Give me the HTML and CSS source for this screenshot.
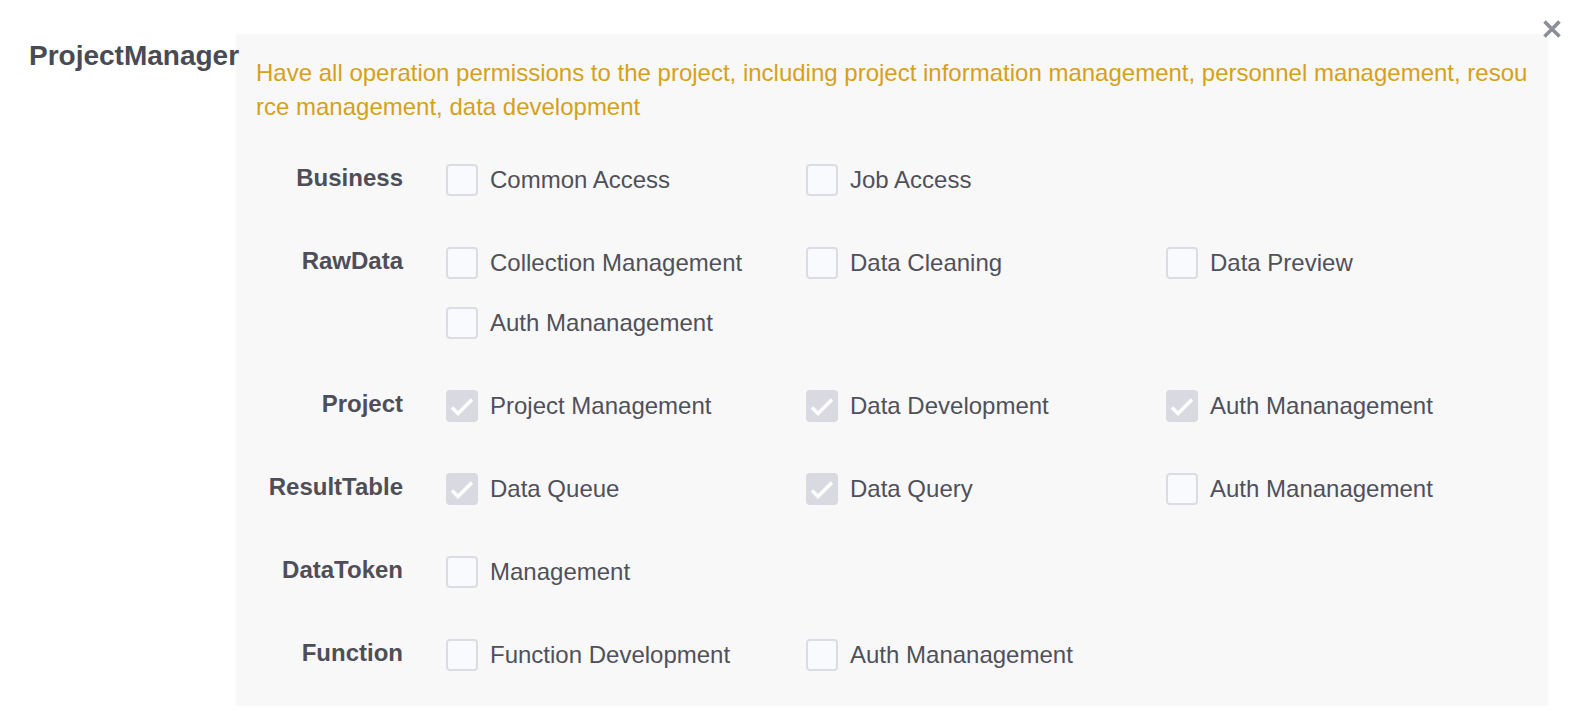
FILE: index.html
```html
<!DOCTYPE html>
<html lang="en">
<head>
<meta charset="utf-8">
<title>Project role</title>
<link rel="stylesheet" href="styles.css">
</head>
<body>
<div class="page">
  <div class="role-title">ProjectManager</div>
  <div class="panel">
    <p class="desc">Have all operation permissions to the project, including project information management, personnel management, resource management, data development</p>
    <div class="groups">
      <div class="group">
        <div class="group-label">Business</div>
        <div class="items">
          <label class="item"><span class="box"></span><span class="text">Common Access</span></label>
          <label class="item"><span class="box"></span><span class="text">Job Access</span></label>
        </div>
      </div>
      <div class="group">
        <div class="group-label">RawData</div>
        <div class="items">
          <label class="item"><span class="box"></span><span class="text">Collection Management</span></label>
          <label class="item"><span class="box"></span><span class="text">Data Cleaning</span></label>
          <label class="item"><span class="box"></span><span class="text">Data Preview</span></label>
          <label class="item"><span class="box"></span><span class="text">Auth Mananagement</span></label>
        </div>
      </div>
      <div class="group">
        <div class="group-label">Project</div>
        <div class="items">
          <label class="item"><span class="box checked"><svg viewBox="0 0 32 32"><path d="M6 17.5 L12 23.5 L26 9.5"/></svg></span><span class="text">Project Management</span></label>
          <label class="item"><span class="box checked"><svg viewBox="0 0 32 32"><path d="M6 17.5 L12 23.5 L26 9.5"/></svg></span><span class="text">Data Development</span></label>
          <label class="item"><span class="box checked"><svg viewBox="0 0 32 32"><path d="M6 17.5 L12 23.5 L26 9.5"/></svg></span><span class="text">Auth Mananagement</span></label>
        </div>
      </div>
      <div class="group">
        <div class="group-label">ResultTable</div>
        <div class="items">
          <label class="item"><span class="box checked"><svg viewBox="0 0 32 32"><path d="M6 17.5 L12 23.5 L26 9.5"/></svg></span><span class="text">Data Queue</span></label>
          <label class="item"><span class="box checked"><svg viewBox="0 0 32 32"><path d="M6 17.5 L12 23.5 L26 9.5"/></svg></span><span class="text">Data Query</span></label>
          <label class="item"><span class="box"></span><span class="text">Auth Mananagement</span></label>
        </div>
      </div>
      <div class="group">
        <div class="group-label">DataToken</div>
        <div class="items">
          <label class="item"><span class="box"></span><span class="text">Management</span></label>
        </div>
      </div>
      <div class="group">
        <div class="group-label">Function</div>
        <div class="items">
          <label class="item"><span class="box"></span><span class="text">Function Development</span></label>
          <label class="item"><span class="box"></span><span class="text">Auth Mananagement</span></label>
        </div>
      </div>
    </div>
  </div>
  <button class="close" aria-label="Close"><svg viewBox="0 0 20 20"><path d="M2.5 2.5 L17.5 17.5 M17.5 2.5 L2.5 17.5"/></svg></button>
</div>
</body>
</html>
```
FILE: styles.css
```css
html, body {
  margin: 0;
  padding: 0;
  background: #ffffff;
}
body {
  font-family: "Liberation Sans", Arial, Helvetica, sans-serif;
  color: #50505a;
}
.page {
  position: relative;
  display: flex;
  align-items: flex-start;
  width: 1576px;
  height: 720px;
}
.role-title {
  position: relative;
  z-index: 1;
  box-sizing: border-box;
  width: 236px;
  flex: none;
  padding: 39px 0 0 29px;
  font-size: 28px;
  line-height: 34px;
  font-weight: bold;
  color: #4a4a54;
  white-space: nowrap;
}
.panel {
  box-sizing: border-box;
  flex: none;
  width: 1312px;
  height: 672px;
  margin-top: 34px;
  background: #f8f8f8;
  padding: 22px 37px 0 20px;
}
.desc {
  margin: 0;
  font-size: 24px;
  line-height: 34px;
  color: #d5a119;
  word-break: break-all;
  width: 1274px;
}
.groups {
  display: flex;
  flex-direction: column;
  gap: 51px;
  margin-top: 40px;
}
.group {
  display: flex;
  align-items: flex-start;
}
.group-label {
  width: 147px;
  flex: none;
  margin-right: 43px;
  text-align: right;
  font-size: 24px;
  line-height: 28px;
  font-weight: bold;
  color: #4e4e58;
}
.items {
  display: grid;
  grid-template-columns: repeat(3, 360px);
  row-gap: 28px;
}
.item {
  display: flex;
  align-items: center;
  height: 32px;
  gap: 12px;
}
.box {
  box-sizing: border-box;
  width: 32px;
  height: 32px;
  flex: none;
  border: 2px solid #dcdde4;
  border-radius: 4px;
  background: #f9fafd;
  display: flex;
  align-items: center;
  justify-content: center;
}
.box.checked {
  background: #d8d9e1;
  border-color: #d8d9e1;
}
.box svg {
  width: 32px;
  height: 32px;
  flex: none;
  margin: -2px;
}
.box svg path {
  fill: none;
  stroke: #ffffff;
  stroke-width: 3.5;
  stroke-linecap: butt;
  stroke-linejoin: miter;
}
.text {
  font-size: 24px;
  line-height: 32px;
  color: #50505a;
  white-space: nowrap;
}
.close {
  position: absolute;
  left: 1542px;
  top: 19px;
  width: 20px;
  height: 20px;
  padding: 0;
  margin: 0;
  border: 0;
  background: transparent;
  cursor: pointer;
}
.close svg {
  display: block;
  width: 20px;
  height: 20px;
}
.close svg path {
  fill: none;
  stroke: #8b8e96;
  stroke-width: 3.6;
}
```
